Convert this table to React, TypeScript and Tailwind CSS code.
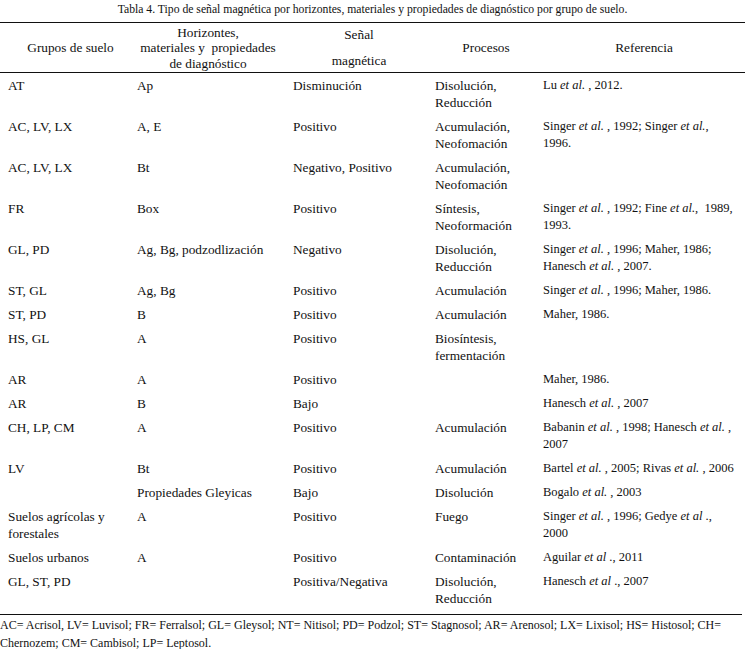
import React from "react";

type Row = {
  g: React.ReactNode;
  h: React.ReactNode;
  s: React.ReactNode;
  p: React.ReactNode;
  r: React.ReactNode;
};

const E = () => <i>et al.</i>;

const rows: Row[] = [
  { g: "AT", h: "Ap", s: "Disminución", p: <>Disolución,<br />Reducción</>, r: <>Lu <E /> , 2012.</> },
  { g: "AC, LV, LX", h: "A, E", s: "Positivo", p: <>Acumulación,<br />Neofomación</>, r: <>Singer <E /> , 1992; Singer <E />,<br />1996.</> },
  { g: "AC, LV, LX", h: "Bt", s: "Negativo, Positivo", p: <>Acumulación,<br />Neofomación</>, r: "" },
  { g: "FR", h: "Box", s: "Positivo", p: <>Síntesis,<br />Neoformación</>, r: <>Singer <E /> , 1992; Fine <E />,&nbsp; 1989,<br />1993.</> },
  { g: "GL, PD", h: "Ag, Bg, podzodlización", s: "Negativo", p: <>Disolución,<br />Reducción</>, r: <>Singer <E /> , 1996; Maher, 1986;<br />Hanesch <E /> , 2007.</> },
  { g: "ST, GL", h: "Ag, Bg", s: "Positivo", p: "Acumulación", r: <>Singer <E /> , 1996; Maher, 1986.</> },
  { g: "ST, PD", h: "B", s: "Positivo", p: "Acumulación", r: "Maher, 1986." },
  { g: "HS, GL", h: "A", s: "Positivo", p: <>Biosíntesis,<br />fermentación</>, r: "" },
  { g: "AR", h: "A", s: "Positivo", p: "", r: "Maher, 1986." },
  { g: "AR", h: "B", s: "Bajo", p: "", r: <>Hanesch <E /> , 2007</> },
  { g: "CH, LP, CM", h: "A", s: "Positivo", p: "Acumulación", r: <>Babanin <E /> , 1998; Hanesch <E /> ,<br />2007</> },
  { g: "LV", h: "Bt", s: "Positivo", p: "Acumulación", r: <>Bartel <E /> , 2005; Rivas <E /> , 2006</> },
  { g: "", h: "Propiedades Gleyicas", s: "Bajo", p: "Disolución", r: <>Bogalo <E /> , 2003</> },
  { g: <>Suelos agrícolas y<br />forestales</>, h: "A", s: "Positivo", p: "Fuego", r: <>Singer <E /> , 1996; Gedye <i>et al</i> .,<br />2000</> },
  { g: "Suelos urbanos", h: "A", s: "Positivo", p: "Contaminación", r: <>Aguilar <i>et al</i> ., 2011</> },
  { g: "GL, ST, PD", h: "", s: "Positiva/Negativa", p: <>Disolución,<br />Reducción</>, r: <>Hanesch <i>et al</i> ., 2007</> },
];

const serif = '"Liberation Serif", "Times New Roman", serif';

export default function App() {
  return (
    <div
      className="w-[745px] h-[649px] bg-white text-[#111] overflow-hidden"
      style={{ fontFamily: serif }}
    >
      <div className="h-[22px] pt-[3px] text-center text-[11.7px] leading-[14px]">
        Tabla 4. Tipo de señal magnética por horizontes, materiales y propiedades de diagnóstico por grupo de suelo.
      </div>
      <table
        className="w-[745px] table-fixed border-collapse text-[13.3px] text-[#111]"
        style={{ fontFamily: serif }}
      >
        <colgroup>
          <col className="w-[129px]" />
          <col className="w-[156px]" />
          <col className="w-[142px]" />
          <col className="w-[108px]" />
          <col className="w-[210px]" />
        </colgroup>
        <thead>
          <tr className="border-t-[1.5px] border-b-[1.5px] border-[#111] h-[50px]">
            <th className="font-normal text-center align-middle leading-[16px] pl-[12px]">Grupos de suelo</th>
            <th className="font-normal text-center align-middle leading-[15.5px] pl-[2px] pt-[1px]">
              Horizontes,<br />materiales y&nbsp; propiedades<br />de diagnóstico
            </th>
            <th className="font-normal text-center align-middle leading-[16px] pl-[6px]">
              <div>Señal</div>
              <div className="mt-[10px]">magnética</div>
            </th>
            <th className="font-normal text-center align-middle leading-[16px] pl-[10px]">Procesos</th>
            <th className="font-normal text-center align-middle leading-[16px] pl-[8px]">Referencia</th>
          </tr>
        </thead>
        <tbody>
          {rows.map((row, i) => (
            <tr key={i} className="align-top leading-[17px]">
              <td className="pl-[8px] pt-[4px] pb-[3px] whitespace-nowrap">{row.g}</td>
              <td className="pl-[8px] pt-[4px] pb-[3px] whitespace-nowrap">{row.h}</td>
              <td className="pl-[8px] pt-[4px] pb-[3px] whitespace-nowrap">{row.s}</td>
              <td className="pl-[8px] pt-[4px] pb-[3px] whitespace-nowrap">{row.p}</td>
              <td className="pl-[8px] pt-[4px] pb-[3px] whitespace-nowrap text-[12.5px]">{row.r}</td>
            </tr>
          ))}
        </tbody>
      </table>
      <div className="mt-[4px] w-[742px] border-t-[1.5px] border-[#111] pt-[1px] text-[12px] leading-[18px] whitespace-nowrap">
        AC= Acrisol, LV= Luvisol; FR= Ferralsol; GL= Gleysol; NT= Nitisol; PD= Podzol; ST= Stagnosol; AR= Arenosol; LX= Lixisol; HS= Histosol; CH=
        <br />
        Chernozem; CM= Cambisol; LP= Leptosol.
      </div>
    </div>
  );
}
